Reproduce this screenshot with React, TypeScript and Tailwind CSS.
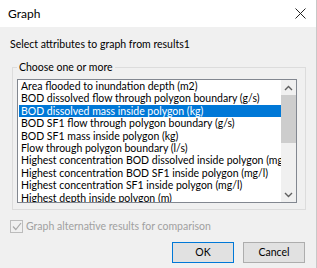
const items = [
  "Area flooded to inundation depth (m2)",
  "BOD dissolved flow through polygon boundary (g/s)",
  "BOD dissolved mass inside polygon (kg)",
  "BOD SF1 flow through polygon boundary (g/s)",
  "BOD SF1 mass inside polygon (kg)",
  "Flow through polygon boundary (l/s)",
  "Highest concentration BOD dissolved inside polygon (mg/l)",
  "Highest concentration BOD SF1 inside polygon (mg/l)",
  "Highest concentration SF1 inside polygon (mg/l)",
  "Highest depth inside polygon (m)",
]

function Chevron({ up }: { up?: boolean }) {
  return (
    <svg width="9" height="6" viewBox="0 0 9 6" className="block">
      <path
        d={up ? "M1 5 L4.5 1.5 L8 5" : "M1 1 L4.5 4.5 L8 1"}
        fill="none"
        stroke="#606060"
        strokeWidth="1.4"
      />
    </svg>
  )
}

export default function App() {
  const selected = 2

  return (
    <div
      className="w-[317px] h-[268px] overflow-hidden bg-[#f0f0f0] text-[10.5px] text-black border-r border-[#c8c8c8]"
      style={{ fontFamily: 'Lato, "Noto Sans", sans-serif' }}
    >
      {/* Title bar */}
      <div className="flex h-[27px] items-center justify-between bg-white pl-[8px] pr-[10px]">
        <span className="text-[12px] leading-[14px]">Graph</span>
        <svg width="11" height="11" viewBox="0 0 11 11">
          <path d="M0.5 0.5 L10.5 10.5 M10.5 0.5 L0.5 10.5" stroke="#222" strokeWidth="1" />
        </svg>
      </div>

      <div className="ml-[10px] mt-[10px] h-[14px] leading-[14px]">
        Select attributes to graph from results1
      </div>

      {/* Group box */}
      <fieldset className="ml-[12px] mt-[9px] w-[294px] border border-[#dcdcdc] px-[4px] pb-[6px]">
        <legend className="ml-0 px-[2px] leading-[14px]">Choose one or more</legend>

        {/* List box */}
        <div className="mt-[5px] flex h-[124px] w-[280px] border border-[#828790] bg-white">
          <div className="flex-1 overflow-hidden pl-[1px]">
            {items.map((item, i) => (
              <div
                key={item}
                className={
                  "h-[12.4px] overflow-hidden whitespace-nowrap pl-[2px] leading-[12.4px] " +
                  (i === selected ? "bg-[#0078d7] text-white" : "")
                }
              >
                {item}
              </div>
            ))}
          </div>

          {/* Scrollbar */}
          <div className="flex w-[15px] flex-col bg-[#f0f0f0]">
            <div className="flex h-[15px] items-center justify-center">
              <Chevron up />
            </div>
            <div className="h-[48px] bg-[#cdcdcd]" />
            <div className="flex-1" />
            <div className="flex h-[15px] items-center justify-center">
              <Chevron />
            </div>
          </div>
        </div>
      </fieldset>

      {/* Checkbox */}
      <div className="ml-[10px] mt-[10px] flex h-[13px] items-center gap-[3px] text-[#a0a0a0]">
        <div className="flex h-[13px] w-[13px] items-center justify-center border border-[#bcbcbc] bg-[#f0f0f0]">
          <svg width="10" height="9" viewBox="0 0 10 9">
            <path d="M1 4.5 L3.8 7.5 L9 1" fill="none" stroke="#a8a8a8" strokeWidth="1.2" />
          </svg>
        </div>
        <span className="leading-[13px]">Graph alternative results for comparison</span>
      </div>

      {/* Buttons */}
      <div className="ml-[172px] mt-[9px] flex gap-[9px]">
        <button className="h-[21px] w-[62px] border border-[#0078d7] bg-[#e1e1e1] leading-[19px]">
          OK
        </button>
        <button className="h-[21px] w-[62px] border border-[#adadad] bg-[#e1e1e1] leading-[19px]">
          Cancel
        </button>
      </div>
    </div>
  )
}
